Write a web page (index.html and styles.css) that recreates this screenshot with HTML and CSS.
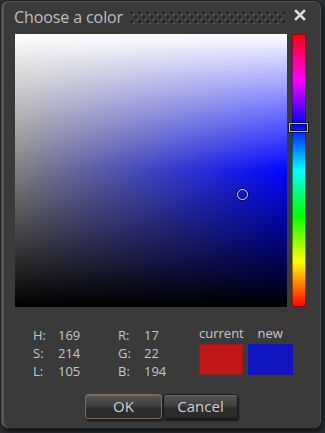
FILE: index.html
```html
<!DOCTYPE html>
<html>
<head>
<meta charset="utf-8">
<link rel="stylesheet" href="styles.css">
</head>
<body>
<div class="dialog">
  <div class="titlebar">
    <span class="title">Choose a color</span>
    <span class="grip"></span>
    <svg class="close" viewBox="0 0 12 12" width="12" height="12"><path d="M2 2 L10 10 M10 2 L2 10" stroke="#dcdcdc" stroke-width="2.6" stroke-linecap="square" fill="none"/></svg>
  </div>
  <div class="picker">
    <div class="sv">
      <div class="cursor"></div>
    </div>
    <div class="hue">
      <div class="hue-thumb"></div>
    </div>
  </div>
  <div class="info">
    <div class="values">
      <span>H:</span><span>169</span><span>R:</span><span>17</span>
      <span>S:</span><span>214</span><span>G:</span><span>22</span>
      <span>L:</span><span>105</span><span>B:</span><span>194</span>
    </div>
    <div class="swatches">
      <div class="swatch-col">
        <span class="swatch-label">current</span>
        <div class="swatch current"></div>
      </div>
      <div class="swatch-col">
        <span class="swatch-label">new</span>
        <div class="swatch new"></div>
      </div>
    </div>
  </div>
  <div class="buttons">
    <button class="btn ok">OK</button>
    <button class="btn cancel">Cancel</button>
  </div>
</div>
</body>
</html>
```

FILE: styles.css
```css
html, body {
  margin: 0;
  padding: 0;
}
body {
  width: 325px;
  height: 433px;
  background: #2a2f36;
  font-family: "Open Sans", "DejaVu Sans", sans-serif;
  overflow: hidden;
}
.dialog {
  box-sizing: border-box;
  width: 322px;
  height: 429px;
  background: #3a3a3a;
  border-radius: 8px;
  border: 1px solid #202020;
  box-shadow: inset 3px 0 0 #545454, inset -1px 0 0 #4a4a4a, inset 0 1px 0 #505050, 2px 3px 4px rgba(0,0,0,.6);
  overflow: hidden;
}
.titlebar {
  height: 33px;
  display: flex;
  align-items: center;
  padding-left: 13px;
}
.title {
  font-size: 16px;
  color: #bfbfbf;
  line-height: 20px;
  margin-top: -1px;
  letter-spacing: -0.1px;
}
.grip {
  width: 155px;
  height: 13px;
  margin-left: auto;
  margin-top: 0;
  background-image:
    radial-gradient(circle at 2px 2px, #1e1e1e 1.2px, transparent 1.9px),
    radial-gradient(circle at 3px 3px, #6a6a6a 1.1px, transparent 1.8px),
    radial-gradient(circle at 2px 2px, #1e1e1e 1.2px, transparent 1.9px),
    radial-gradient(circle at 3px 3px, #6a6a6a 1.1px, transparent 1.8px);
  background-size: 8px 9px;
  background-position: 0 0, 0 0, 4px 4.5px, 4px 4.5px;
}
.close {
  margin-left: 9px;
  margin-right: 15px;
  margin-top: -6px;
  display: block;
}
.picker {
  display: flex;
  gap: 5px;
  padding-left: 14px;
}
.sv {
  position: relative;
  width: 272px;
  height: 273px;
  background:
    linear-gradient(to bottom, #ffffff 0%, rgba(255,255,255,0) 50%, rgba(0,0,0,0) 50%, #000000 100%),
    linear-gradient(to right, #808080, #0006ff);
}
.cursor {
  position: absolute;
  left: 222px;
  top: 155px;
  width: 9px;
  height: 9px;
  border: 1.5px solid #e2e2e2;
  border-radius: 50%;
  box-shadow: 0 0 0 1px rgba(0,0,0,.55), inset 0 0 0 1px rgba(0,0,0,.4);
}
.hue {
  position: relative;
  width: 14px;
  height: 273px;
  background: linear-gradient(to bottom, #ff0000 0%, #ff00ff 16.67%, #0000ff 33.33%, #00ffff 50%, #00ff00 66.67%, #ffff00 83.33%, #ff0000 100%);
  box-shadow: inset 0 0 0 1px rgba(0,0,0,.4);
}
.hue-thumb {
  position: absolute;
  left: -3px;
  top: 89px;
  width: 17px;
  height: 7px;
  border: 1px solid #b8b8b8;
  box-shadow: 0 0 0 1px rgba(0,0,0,.6), inset 0 0 0 1px rgba(0,0,0,.6);
}
.info {
  display: flex;
  padding-left: 32px;
  margin-top: 19px;
  height: 55px;
}
.values {
  width: 166px;
  display: grid;
  grid-template-columns: 25px 60px 26px auto;
  grid-auto-rows: 18px;
  font-size: 13px;
  line-height: 18px;
  color: #c4c8cc;
}
.swatches {
  display: flex;
  gap: 4px;
  margin-top: -1px;
}
.swatch-col {
  display: flex;
  flex-direction: column;
  align-items: center;
}
.swatch-label {
  font-size: 13px;
  line-height: 16px;
  color: #c8c8c8;
  margin-bottom: 3px;
}
.swatch {
  width: 44px;
  height: 31px;
}
.swatch.current {
  width: 44px;
  background: #c01818;
  box-shadow: inset 0 0 0 1px #a81414;
}
.swatch.new {
  width: 45px;
  background: #1116c2;
}
.buttons {
  display: flex;
  gap: 1px;
  padding-left: 84px;
  margin-top: 13px;
}
.btn {
  height: 25px;
  box-sizing: border-box;
  font-family: "Open Sans", "DejaVu Sans", sans-serif;
  font-size: 15px;
  line-height: 21px;
  padding: 0;
  color: #cfcfcf;
  background: linear-gradient(to bottom, #555555 0%, #404040 45%, #2e2e2e 55%, #2a2a2a 100%);
  border: 1px solid #191919;
  border-radius: 3px;
  box-shadow: inset 0 1px 0 #6a6a6a, 1px 2px 2px rgba(0,0,0,.6);
}
.btn.ok {
  width: 77px;
  border-color: #8a6a48;
}
.btn.cancel {
  width: 75px;
}
```
